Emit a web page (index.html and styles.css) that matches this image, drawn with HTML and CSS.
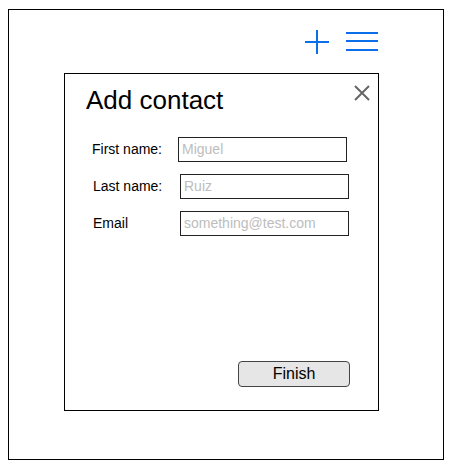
FILE: index.html
```html
<!DOCTYPE html>
<html>
<head>
<meta charset="utf-8">
<link rel="stylesheet" href="styles.css">
</head>
<body>
<div class="frame">
  <div class="toolbar">
    <svg class="icon-plus" width="26" height="26" viewBox="0 0 26 26"><path d="M1 14H25M13 2V26" stroke="#0a6fe8" stroke-width="2" fill="none"/></svg>
    <svg class="icon-menu" width="34" height="26" viewBox="0 0 34 26"><path d="M1 5H33M1 13H33M1 22H33" stroke="#0a6fe8" stroke-width="2" fill="none"/></svg>
  </div>
  <div class="dialog">
    <div class="dialog-header">
      <h1 class="title">Add contact</h1>
      <svg class="close" width="16" height="16" viewBox="0 0 16 16"><path d="M1 1L15 15M15 1L1 15" stroke="#666" stroke-width="2" fill="none"/></svg>
    </div>
    <div class="form">
      <div class="row">
        <span class="label">First name:</span>
        <span class="input">Miguel</span>
      </div>
      <div class="row row--shift">
        <span class="label">Last name:</span>
        <span class="input">Ruiz</span>
      </div>
      <div class="row row--shift">
        <span class="label">Email</span>
        <span class="input">something@test.com</span>
      </div>
    </div>
    <div class="footer">
      <button class="btn">Finish</button>
    </div>
  </div>
</div>
</body>
</html>
```
FILE: styles.css
```css
* { box-sizing: border-box; }
html, body { margin: 0; padding: 0; background: #fff; }
body { font-family: "Liberation Sans", Arial, sans-serif; color: #000; }

.frame {
  width: 436px;
  height: 451px;
  margin: 9px 0 0 8px;
  border: 1px solid #000;
  display: flex;
  flex-direction: column;
}

.toolbar {
  display: flex;
  justify-content: flex-end;
  align-items: flex-start;
  gap: 15px;
  padding: 18px 64px 0 0;
}
.toolbar svg { display: block; }

.dialog {
  width: 315px;
  height: 338px;
  margin: 19px 0 0 55px;
  border: 1px solid #000;
  display: flex;
  flex-direction: column;
}

.dialog-header {
  display: flex;
  justify-content: space-between;
  align-items: flex-start;
  padding: 11px 8px 0 21px;
}
.title {
  margin: 1px 0 0 0;
  font-size: 26px;
  line-height: 29px;
  font-weight: normal;
}
.close { display: block; }

.form {
  display: flex;
  flex-direction: column;
  gap: 12px;
  margin-top: 22px;
}
.row {
  display: flex;
  align-items: center;
  padding-left: 27px;
}
.row--shift { padding-left: 28px; }
.label {
  width: 86px;
  font-size: 14px;
  line-height: 16px;
  margin-top: -2px;
}
.row--shift .label { width: 87px; }
.input {
  width: 169px;
  height: 25px;
  border: 1px solid #222;
  padding: 0 0 0 3px;
  font-size: 14px;
  line-height: 23px;
  color: #bdbdbd;
}

.footer {
  margin-top: auto;
  display: flex;
  justify-content: flex-end;
  padding: 0 28px 23px 0;
}
.btn {
  width: 112px;
  height: 26px;
  border: 1px solid #444;
  border-radius: 4px;
  background: #e6e6e6;
  font-family: "Liberation Sans", Arial, sans-serif;
  font-size: 16px;
  line-height: 22px;
  color: #000;
  padding: 0;
}
```
